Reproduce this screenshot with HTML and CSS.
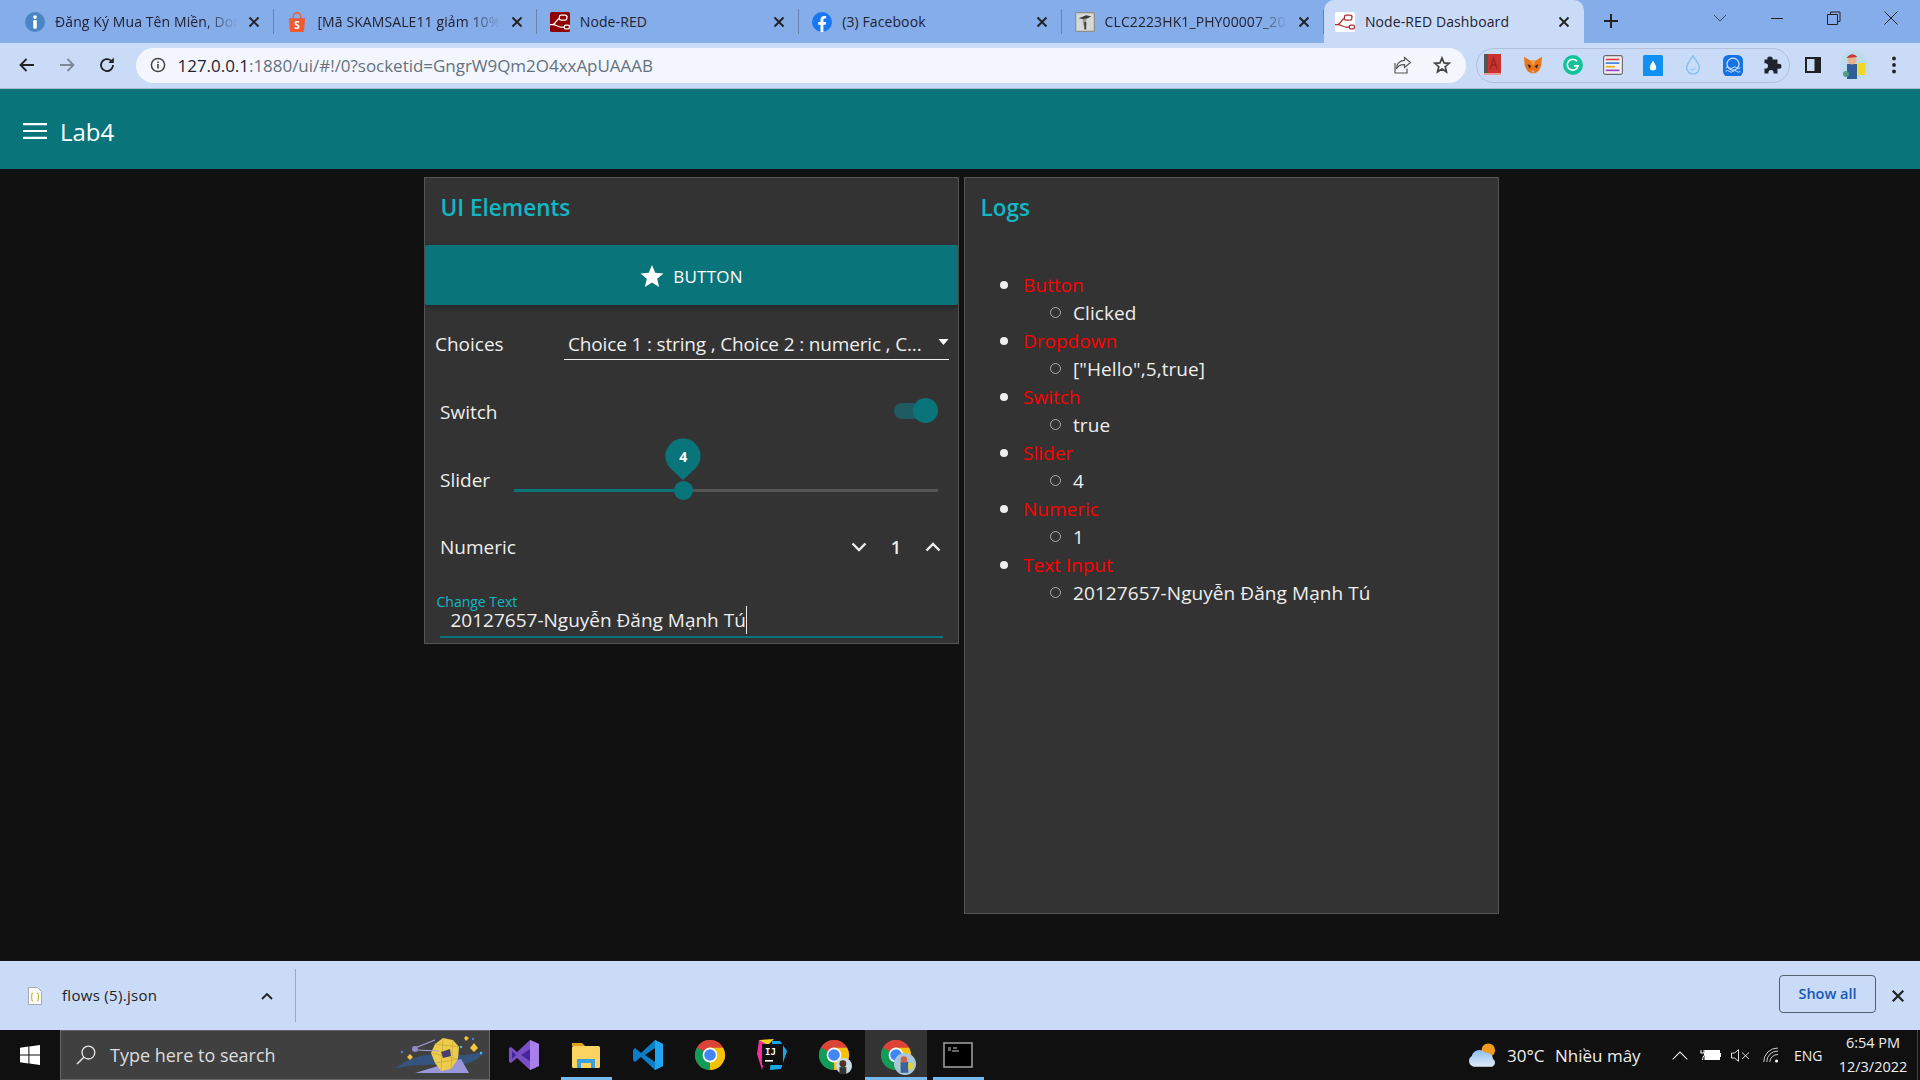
FILE: index.html
```html
<!DOCTYPE html>
<html lang="vi">
<head>
<meta charset="utf-8">
<title>Node-RED Dashboard</title>
<link rel="stylesheet" href="styles.css">
</head>
<body>
<svg class="defs" width="0" height="0" aria-hidden="true">
  <defs>
    <linearGradient id="cloud-fill" x1="0" y1="0" x2="0" y2="1"><stop offset="0" stop-color="#8fc0f2"/><stop offset="1" stop-color="#dfeaf8"/></linearGradient>
  </defs>
  <symbol id="chrome" viewBox="0 0 32 32">
    <circle cx="16" cy="16" r="15" fill="#db4437"/>
    <path d="M16 16 L3 8.5 A15 15 0 0 0 16 31 Z" fill="#0f9d58"/>
    <path d="M16 16 L16 31 A15 15 0 0 0 29 8.5 L16 8.5 Z" fill="#f4c20d"/>
    <path d="M16 8.5 L3 8.5 A15 15 0 0 1 29 8.5 Z" fill="#db4437"/>
    <circle cx="16" cy="16" r="7.4" fill="#fff"/>
    <circle cx="16" cy="16" r="5.8" fill="#4285f4"/>
  </symbol>
  <symbol id="close" viewBox="0 0 12 12">
    <path d="M1.5 1.5 L10.5 10.5 M10.5 1.5 L1.5 10.5" fill="none" stroke="#222" stroke-width="1.9"/>
  </symbol>
</svg>

<div class="tabstrip">
  <div class="tab">
    <svg class="favicon" viewBox="0 0 16 16"><circle cx="8" cy="8" r="8" fill="#4a86c5"/><circle cx="8" cy="4" r="1.5" fill="#fff"/><rect x="6.6" y="6.4" width="2.8" height="7" rx="1" fill="#fff"/></svg>
    <span class="tab-title">Đăng Ký Mua Tên Miền, Don</span>
    <svg class="tab-x"><use href="#close"/></svg>
  </div>
  <div class="tab">
    <svg class="favicon" viewBox="0 0 16 16"><path d="M1.5 5 H14.5 L13.6 15.4 Q13.5 16 12.8 16 H3.2 Q2.5 16 2.4 15.4 Z" fill="#f05a30"/><path d="M5 5 V3.6 A3 3 0 0 1 11 3.6 V5" fill="none" stroke="#f05a30" stroke-width="1.1"/><text x="8" y="13.4" class="fav-s">S</text></svg>
    <span class="tab-title">[Mã SKAMSALE11 giảm 10%</span>
    <svg class="tab-x"><use href="#close"/></svg>
  </div>
  <div class="tab">
    <svg class="favicon" viewBox="0 0 16 16"><rect width="16" height="16" rx="1.5" fill="#8f0000"/><path d="M0 10 H2 C5 10 5 5 8 5 M0 10 H2 C5 10 6 12 9 12 H12 M14 3.5 H10" fill="none" stroke="#fff" stroke-width="1"/><rect x="7.5" y="2.5" width="6" height="4" rx="1.4" fill="#8f0000" stroke="#fff" stroke-width="1"/><rect x="11.5" y="10.5" width="4" height="3" rx="1" fill="#8f0000" stroke="#fff" stroke-width="1"/></svg>
    <span class="tab-title tab-title-plain">Node-RED</span>
    <svg class="tab-x"><use href="#close"/></svg>
  </div>
  <div class="tab">
    <svg class="favicon" viewBox="0 0 16 16"><circle cx="8" cy="8" r="8" fill="#1877f2"/><path d="M6.8 16 V10.2 H5 V7.9 H6.8 V6.2 C6.8 4.2 8 3.1 9.8 3.1 L11.3 3.2 V5.2 H10.3 C9.3 5.2 9.1 5.7 9.1 6.4 V7.9 H11.2 L10.9 10.2 H9.1 V16 Z" fill="#fff"/></svg>
    <span class="tab-title tab-title-plain">(3) Facebook</span>
    <svg class="tab-x"><use href="#close"/></svg>
  </div>
  <div class="tab">
    <svg class="favicon" viewBox="0 0 16 16"><rect x=".5" y=".5" width="15" height="15" rx="1" fill="#d8d8d6" stroke="#8e8e8c"/><path d="M3 5 L9 2.6 L13 3.6 L8 6 Z" fill="#3a3a3a"/><path d="M6 6 L6.6 11 H9 V5" fill="#9a9a98"/><rect x="7.4" y="8" width="1.6" height="6" fill="#444"/></svg>
    <span class="tab-title">CLC2223HK1_PHY00007_20</span>
    <svg class="tab-x"><use href="#close"/></svg>
  </div>
  <div class="tab tab-active">
    <svg class="favicon" viewBox="0 0 16 16"><rect width="16" height="16" rx="1.5" fill="#fff"/><path d="M0 10 H2 C5 10 5 5 8 5 M0 10 H2 C5 10 6 12 9 12 H12 M14 3.5 H10" fill="none" stroke="#a83232" stroke-width="1"/><rect x="7.5" y="2.5" width="6" height="4" rx="1.4" fill="#fff" stroke="#a83232" stroke-width="1"/><rect x="11.5" y="10.5" width="4" height="3" rx="1" fill="#fff" stroke="#a83232" stroke-width="1"/></svg>
    <span class="tab-title tab-title-plain">Node-RED Dashboard</span>
    <svg class="tab-x"><use href="#close"/></svg>
  </div>
  <svg class="new-tab" viewBox="0 0 16 16"><path d="M8 1 V15 M1 8 H15" fill="none" stroke="#222" stroke-width="2"/></svg>
  <div class="win-controls">
    <svg class="win-btn" viewBox="0 0 14 14"><path d="M1 4 L7 10 L13 4" fill="none" stroke="#3a4a60" stroke-width="1"/></svg>
    <svg class="win-btn" viewBox="0 0 14 14"><path d="M1 7.5 H13" fill="none" stroke="#222" stroke-width="1"/></svg>
    <svg class="win-btn" viewBox="0 0 14 14"><path d="M3.5 3 V1 H13 V10.5 H11 M.5 3.5 H10.5 V13.5 H.5 Z" fill="none" stroke="#222" stroke-width="1"/></svg>
    <svg class="win-btn" viewBox="0 0 14 14"><path d="M.5 .5 L13.5 13.5 M13.5 .5 L.5 13.5" fill="none" stroke="#222" stroke-width="1"/></svg>
  </div>
</div>

<div class="toolbar">
  <svg class="nav" viewBox="0 0 18 18"><path d="M16 9 H3 M8.5 3 L2.5 9 L8.5 15" fill="none" stroke="#222" stroke-width="1.8"/></svg>
  <svg class="nav" viewBox="0 0 18 18"><path d="M2 9 H15 M9.5 3 L15.5 9 L9.5 15" fill="none" stroke="#7d8898" stroke-width="1.8"/></svg>
  <svg class="nav" viewBox="0 0 18 18"><path d="M15 9 A6 6 0 1 1 13 4.6" fill="none" stroke="#222" stroke-width="1.8"/><path d="M15.8 1.6 V7 H10.4 Z" fill="#222"/></svg>
  <div class="omnibox">
    <svg class="info" viewBox="0 0 16 16"><circle cx="8" cy="8" r="6.6" fill="none" stroke="#444" stroke-width="1.5"/><rect x="7.2" y="7" width="1.6" height="4.6" fill="#444"/><rect x="7.2" y="4.4" width="1.6" height="1.6" fill="#444"/></svg>
    <span class="url"><span class="url-host">127.0.0.1</span>:1880/ui/#!/0?socketid=GngrW9Qm2O4xxApUAAAB</span>
    <svg class="omni-icon" viewBox="0 0 20 20"><path d="M12.5 2.5 L18.5 7.5 L12.5 12.5 V9.6 C8 9.4 5.5 11.5 4.5 14 C4.5 9 7.5 5.8 12.5 5.4 Z M3 8 V18 H15 V13.5" fill="none" stroke="#555" stroke-width="1.2"/></svg>
    <svg class="omni-icon" viewBox="0 0 20 20"><path d="M10 3 L12 7.9 L17.2 8.3 L13.2 11.7 L14.5 16.8 L10 14 L5.5 16.8 L6.8 11.7 L2.8 8.3 L8 7.9 Z" fill="none" stroke="#444" stroke-width="1.7"/></svg>
  </div>
  <div class="extensions">
    <svg class="ext" viewBox="0 0 20 22"><rect x="1" y="0" width="17" height="21" fill="#c8322f"/><rect x="1" y="0" width="4" height="21" fill="#555"/><rect x="1" y="19" width="17" height="2" fill="#e89a9a"/><path d="M7 15 L10.5 4 L14 15 M8.4 11 H12.6" fill="none" stroke="#a12421" stroke-width="1.3"/></svg>
    <svg class="ext" viewBox="0 0 22 22"><path d="M1 2 L8 6 H14 L21 2 L20 12 L17 18 L13 20 H9 L5 18 L2 12 Z" fill="#e8761b"/><path d="M8 6 L11 12 L14 6 Z" fill="#f6a35c"/><path d="M5 10 L9 12 L7 15 Z M17 10 L13 12 L15 15 Z" fill="#33261c"/><path d="M9 19 L11 16.5 L13 19 Z" fill="#c8b9ad"/></svg>
    <svg class="ext" viewBox="0 0 22 22"><circle cx="11" cy="11" r="11" fill="#15c39a"/><path d="M15.5 7 A6 6 0 1 0 16.6 12 H12" fill="none" stroke="#fff" stroke-width="1.8"/></svg>
    <svg class="ext" viewBox="0 0 22 22"><rect x=".7" y=".7" width="20.6" height="20.6" rx="2" fill="#f0f0f0" stroke="#666" stroke-width="1.2"/><rect x="3" y="4" width="15" height="1.8" fill="#e04040"/><rect x="3" y="8" width="15" height="1.8" fill="#3a7ee0"/><rect x="3" y="12" width="10" height="1.8" fill="#e8b020"/><rect x="3" y="16" width="15" height="1.8" fill="#9040d0"/></svg>
    <svg class="ext" viewBox="0 0 22 22"><rect width="22" height="24" rx="2" fill="#1090f0"/><path d="M11 6 C13 10 14.5 11.5 14.5 13.5 A3.5 3.5 0 0 1 7.5 13.5 C7.5 11.5 9 10 11 6 Z" fill="#fff"/></svg>
    <svg class="ext" viewBox="0 0 22 22"><path d="M11 1 C15 7 18 10 18 14 A7 7 0 0 1 4 14 C4 10 7 7 11 1 Z" fill="none" stroke="#7cc0f2" stroke-width="1.5"/><path d="M8 16 Q11 18 14 14" fill="none" stroke="#7cc0f2" stroke-width="1"/></svg>
    <svg class="ext" viewBox="0 0 22 22"><rect width="22" height="24" rx="6" fill="#1673e6"/><circle cx="11" cy="10" r="6.6" fill="none" stroke="#cfe4ff" stroke-width="1.3"/><path d="M3 14 Q5 12 7 14 T11 14 T15 14 T19 14 M3 18 Q5 16 7 18 T11 18 T15 18 T19 18" fill="none" stroke="#cfe4ff" stroke-width="1.1"/></svg>
    <svg class="ext" viewBox="0 0 20 20"><path d="M7 1.5 C9.5 1.5 10 3 9.6 4.5 H14.5 V9 C16.5 8.4 18.5 9 18.5 11.3 C18.5 13.6 16.5 14.3 14.5 13.6 V18.5 H10.5 C11 16.5 10 15 8 15 C6 15 5 16.5 5.5 18.5 H1.5 V13.5 C3.5 14 5 13 5 11 C5 9 3.5 8 1.5 8.5 V4.5 H4.5 C4 3 4.5 1.5 7 1.5 Z" fill="#1f2430"/></svg>
  </div>
  <svg class="side-panel" viewBox="0 0 18 18"><rect x="1" y="1" width="16" height="16" fill="#202124"/><rect x="3" y="3" width="7.5" height="12" fill="#c9dbf6"/></svg>
  <svg class="avatar" viewBox="0 0 28 30"><ellipse cx="14" cy="15" rx="13.5" ry="15" fill="#bcdcee"/><rect x="7" y="14" width="10" height="15" fill="#2f5e9a"/><circle cx="12" cy="10" r="4.6" fill="#e6b48c"/><path d="M6.5 8 Q12 1 17.5 7 Z" fill="#c8352c"/><rect x="18" y="13" width="7" height="12" fill="#f1d828"/><circle cx="6" cy="24" r="3" fill="#4fa07c"/></svg>
  <svg class="kebab" viewBox="0 0 6 20"><circle cx="3" cy="3.5" r="1.9" fill="#222"/><circle cx="3" cy="10" r="1.9" fill="#222"/><circle cx="3" cy="16.5" r="1.9" fill="#222"/></svg>
</div>

<header class="appbar">
  <svg class="burger" viewBox="0 0 24 16"><path d="M0 1.2 H24 M0 8 H24 M0 14.8 H24" fill="none" stroke="#fff" stroke-width="2.2"/></svg>
  <span class="app-title">Lab4</span>
</header>

<main class="dashboard">
  <section class="card">
    <h2 class="card-title">UI Elements</h2>
    <button class="action" type="button">
      <svg class="action-star" viewBox="0 0 24 24"><path d="M12 1 L15.2 8.7 L23.5 9.4 L17.2 14.8 L19.1 23 L12 18.6 L4.9 23 L6.8 14.8 L.5 9.4 L8.8 8.7 Z" fill="#fff"/></svg>
      <span>BUTTON</span>
    </button>
    <div class="rows">
      <div class="row row-choices">
        <span class="row-label">Choices</span>
        <div class="select">
          <span class="select-value">Choice 1 : string , Choice 2 : numeric , C...</span>
          <svg class="select-arrow" viewBox="0 0 10 6"><path d="M0 0 H10 L5 6 Z" fill="#fff"/></svg>
        </div>
      </div>
      <div class="row row-wide">
        <span class="row-label">Switch</span>
        <div class="switch"><span class="switch-thumb"></span></div>
      </div>
      <div class="row row-wide row-slider">
        <span class="row-label row-label-slider">Slider</span>
        <div class="slider">
          <span class="slider-fill"></span>
          <span class="slider-thumb"></span>
          <span class="slider-pin"><svg class="pin-shape" viewBox="0 0 36 42"><path d="M18 42 L5.5 30.5 A17.6 17.6 0 1 1 30.5 30.5 Z" fill="#0a747b"/></svg><b class="pin-value">4</b></span>
        </div>
      </div>
      <div class="row row-numeric">
        <span class="row-label">Numeric</span>
        <div class="stepper">
          <svg class="chev" viewBox="0 0 16 10"><path d="M1.5 1.5 L8 8 L14.5 1.5" fill="none" stroke="#eee" stroke-width="2.4"/></svg>
          <span class="stepper-value">1</span>
          <svg class="chev" viewBox="0 0 16 10"><path d="M1.5 8.5 L8 2 L14.5 8.5" fill="none" stroke="#eee" stroke-width="2.4"/></svg>
        </div>
      </div>
      <div class="text-field">
        <span class="field-label">Change Text</span>
        <div class="field-value"><span>20127657-Nguyễn Đăng Mạnh Tú</span><i class="caret"></i></div>
      </div>
    </div>
  </section>

  <section class="card card-logs">
    <h2 class="card-title">Logs</h2>
    <ul class="log">
      <li><span class="log-key">Button</span><ul><li>Clicked</li></ul></li>
      <li><span class="log-key">Dropdown</span><ul><li>["Hello",5,true]</li></ul></li>
      <li><span class="log-key">Switch</span><ul><li>true</li></ul></li>
      <li><span class="log-key">Slider</span><ul><li>4</li></ul></li>
      <li><span class="log-key">Numeric</span><ul><li>1</li></ul></li>
      <li><span class="log-key">Text Input</span><ul><li>20127657-Nguyễn Đăng Mạnh Tú</li></ul></li>
    </ul>
  </section>
</main>

<div class="downloads">
  <svg class="file-icon" viewBox="0 0 14 18"><path d="M.5 .5 H9.5 L13.5 4.5 V17.5 H.5 Z" fill="#fafafa" stroke="#a9a9a9"/><path d="M5 6 Q3.5 6 3.8 9 Q3.8 10 3 10 Q3.8 10 3.8 11 Q3.5 14 5 14 M9 6 Q10.5 6 10.2 9 Q10.2 10 11 10 Q10.2 10 10.2 11 Q10.5 14 9 14" fill="none" stroke="#c9b826" stroke-width="1.1"/></svg>
  <span class="file-name">flows (5).json</span>
  <svg class="file-chev" viewBox="0 0 12 8"><path d="M1 7 L6 2 L11 7" fill="none" stroke="#222" stroke-width="1.9"/></svg>
  <span class="dl-sep"></span>
  <button class="show-all" type="button">Show all</button>
  <svg class="dl-x"><use href="#close"/></svg>
</div>

<footer class="taskbar">
  <svg class="start" viewBox="0 0 20 20"><path d="M0 2.8 L8.4 1.6 V9.4 H0 Z M9.4 1.5 L20 0 V9.4 H9.4 Z M0 10.5 H8.4 V18.4 L0 17.2 Z M9.4 10.5 H20 V20 L9.4 18.5 Z" fill="#fff"/></svg>
  <div class="search">
    <svg class="search-icon" viewBox="0 0 20 20"><circle cx="12.4" cy="7.6" r="6.4" fill="none" stroke="#e8e8e8" stroke-width="1.3"/><path d="M7.8 12.2 L1 19" fill="none" stroke="#e8e8e8" stroke-width="1.5"/></svg>
    <span class="search-text">Type here to search</span>
    <svg class="search-art" viewBox="0 0 92 40"><path d="M0 33 Q22 18 40 20 Q65 22 90 17 Q78 32 50 30 Q25 28 0 33 Z" fill="#35557f"/><path d="M20 38 L66 24 L74 38 Z" fill="#9a96dc"/><path d="M40 9 L48 3 L58 5 L64 12 L63 24 L56 34 L46 36 L40 28 L36 18 Z" fill="#eccc4c"/><path d="M48 3 L46 36 M58 5 L56 34 M36 18 L63 24 M40 9 L64 12 M40 28 L63 24" stroke="#b99a2a" stroke-width=".5" fill="none"/><path d="M46 17 L55 14 L56 21 L48 23 Z" fill="#45406f"/><path d="M20 13 L40 5 M21 15 L44 16" stroke="#a7a2d8" stroke-width="1.2"/><circle cx="20" cy="14" r="3" fill="#8f8ac9"/><path d="M12 22 L15 19 L18 22 L15 25 Z M75 13 L79 8 L83 13 L79 17 Z M69 3 L71 1 L74 3 L71 6 Z" fill="#f3c53d"/><circle cx="7" cy="17" r="1.2" fill="#4b86c8"/><circle cx="66" cy="12" r="1.2" fill="#4bc0e0"/><circle cx="78" cy="4" r="1.2" fill="#4b86c8"/><circle cx="86" cy="18" r="1.2" fill="#4bc0e0"/></svg>
  </div>
  <div class="apps">
    <div class="app"><svg class="app-icon" viewBox="0 0 32 32"><path d="M22 1 L31 5 V27 L22 31 L9 19 L3 24 L1 23 V9 L3 8 L9 13 Z" fill="#7b4fc4"/><path d="M22 1 L31 5 V27 L22 31 Z" fill="#a97fe8"/><path d="M22 10 L13 16 L22 22 Z M4 12 V20 L8 16 Z" fill="#43269a"/></svg></div>
    <div class="app app-open"><svg class="app-icon" viewBox="0 0 32 32"><path d="M2 4 H12 L15 7 H2 Z" fill="#e0a21b"/><rect x="2" y="7" width="28" height="22" rx="1.5" fill="#fbd35f"/><path d="M7 20 H25 V29 H21 V24 H11 V29 H7 Z" fill="#3aa0e2"/></svg></div>
    <div class="app"><svg class="app-icon" viewBox="0 0 32 32"><path d="M23 1 L31 5 V27 L23 31 L9 18 L3 23 L1 21 V11 L3 9 L9 14 Z" fill="#0a7fc9"/><path d="M23 1 L31 5 V27 L23 31 Z" fill="#1fa4ed"/><path d="M23 9 L13 16 L23 23 Z" fill="#101010"/></svg></div>
    <div class="app"><svg class="app-icon"><use href="#chrome"/></svg></div>
    <div class="app"><svg class="app-icon" viewBox="0 0 32 32"><path d="M3 1 L14 2 L6 31 L1 15 Z" fill="#f0309a"/><path d="M16 2 H24 L31 12 L25 30 L14 31 Z" fill="#18a8e8"/><path d="M3 1 L18 0 L12 6 Z" fill="#f5d51a"/><rect x="6" y="5" width="21" height="21" fill="#111"/><text x="9" y="16" class="ij">IJ</text><rect x="9" y="21" width="8" height="1.6" fill="#fff"/></svg></div>
    <div class="app"><span class="app-stack"><svg class="app-icon"><use href="#chrome"/></svg><svg class="app-badge" viewBox="0 0 14 14"><circle cx="7" cy="7" r="7" fill="#c9dce8"/><circle cx="6" cy="5" r="3" fill="#4a3527"/><rect x="3" y="8" width="6" height="6" fill="#333"/></svg></span></div>
    <div class="app app-active"><span class="app-stack"><svg class="app-icon"><use href="#chrome"/></svg><svg class="app-badge app-badge-lg" viewBox="0 0 20 20"><circle cx="10" cy="10" r="10" fill="#a8c8d8"/><rect x="6" y="8" width="7" height="10" fill="#3c649a"/><circle cx="9" cy="6" r="3" fill="#c8644c"/><rect x="13" y="9" width="4" height="6" fill="#e8d030"/></svg></span></div>
    <div class="app app-open"><svg class="app-icon" viewBox="0 0 32 32"><rect x="2" y="4" width="28" height="24" fill="#000" stroke="#9a9a9a" stroke-width="1.6"/><path d="M6 9 H9 M11 9 H15 M6 11 H9 M10 12 H17" stroke="#ccc" stroke-width="1"/></svg></div>
  </div>
  <div class="tray">
    <svg class="weather" viewBox="0 0 32 26"><circle cx="22" cy="8" r="7" fill="#f19a1f"/><path d="M7 25 A6 6 0 0 1 5 14 A8 8 0 0 1 19 11 A6.5 6.5 0 0 1 27 17 A4.5 4.5 0 0 1 26 25 Z" fill="url(#cloud-fill)"/></svg>
    <span class="temp">30°C</span>
    <span class="weather-text">Nhiều mây</span>
    <svg class="tray-chev" viewBox="0 0 16 9"><path d="M.7 8.3 L8 1 L15.3 8.3" fill="none" stroke="#eee" stroke-width="1.1"/></svg>
    <svg class="tray-batt" viewBox="0 0 21 12"><rect x="5" y="1.5" width="14.5" height="9" fill="#fff" stroke="#fff"/><rect x="20" y="4" width="1" height="4" fill="#fff"/><path d="M1 1 V4 M4 1 V4 M.5 4 H4.5 V6 Q2.5 8 2.5 11" fill="none" stroke="#fff"/></svg>
    <svg class="tray-sound" viewBox="0 0 19 13"><path d="M.5 4 H3.5 L7.5 .7 V12.3 L3.5 9 H.5 Z" fill="none" stroke="#ddd"/><path d="M11 3.5 L18 10 M18 3.5 L11 10" stroke="#ddd"/></svg>
    <svg class="tray-wifi" viewBox="0 0 16 16"><path d="M.7 15 A14 14 0 0 1 15 1 M3.7 15 A11 11 0 0 1 15 4 M6.7 15 A8 8 0 0 1 15 7.5" fill="none" stroke="#ccc"/><circle cx="13.5" cy="14" r="1.5" fill="#fff"/></svg>
    <span class="lang">ENG</span>
    <div class="clock"><span>6:54 PM</span><span>12/3/2022</span></div>
    <span class="desk-peek"></span>
  </div>
</footer>
</body>
</html>
```
FILE: styles.css
```css
* { box-sizing: border-box; }
html, body { margin: 0; height: 100%; }
body {
  display: flex;
  flex-direction: column;
  height: 1080px;
  overflow: hidden;
  background: #111;
  font-family: "Open Sans", "Noto Sans", sans-serif;
  color: #eee;
}
.defs { position: absolute; }

/* browser tabs */
.tabstrip {
  flex: none;
  height: 43px;
  display: flex;
  padding-left: 12px;
  background: #85ade9;
  color: #223;
}
.tab {
  flex: none;
  width: 262.4px;
  height: 43px;
  display: flex;
  align-items: center;
  padding: 0 14px 0 13px;
  position: relative;
  font-size: 14px;
  letter-spacing: .1px;
}
.tab::after {
  content: "";
  position: absolute;
  right: 0;
  top: 9px;
  width: 1px;
  height: 25px;
  background: #6a83aa;
}
.tab-active {
  width: 260px;
  padding-left: 11px;
  background: #c9dbf6;
  border-radius: 10px 10px 0 0;
}
.tab:nth-last-of-type(2)::after, .tab-active::after { display: none; }
.favicon { flex: none; width: 20px; height: 20px; margin-right: 10px; }
.tab-title {
  flex: 1;
  min-width: 0;
  white-space: nowrap;
  -webkit-mask-image: linear-gradient(90deg, #000 80%, transparent 98%);
  mask-image: linear-gradient(90deg, #000 80%, transparent 98%);
}
.tab-title-plain { -webkit-mask-image: none; mask-image: none; }
.tab-x { flex: none; width: 12px; height: 12px; margin-left: 6px; }
.fav-s { font: 700 8px "Open Sans", sans-serif; fill: #fff; text-anchor: middle; }
.new-tab { flex: none; width: 16px; height: 16px; margin: 13px 0 0 19px; }
.win-controls {
  flex: none;
  display: flex;
  margin-left: 94px;
  gap: 43px;
  padding-top: 11px;
  align-items: flex-start;
}
.win-btn { width: 14px; height: 14px; }

/* address bar */
.toolbar {
  flex: none;
  height: 46px;
  display: flex;
  align-items: center;
  padding: 0 0 1px 18px;
  background: #c9dbf6;
  border-bottom: 1px solid #a9b9d4;
}
.nav { flex: none; width: 18px; height: 18px; margin-right: 22px; }
.omnibox {
  flex: none;
  width: 1330px;
  height: 35px;
  margin-left: -2.5px;
  display: flex;
  align-items: center;
  padding: 0 14px 0 14px;
  background: #f3f7fd;
  border-radius: 18px;
}
.info { flex: none; width: 16px; height: 16px; margin-right: 12px; }
.url { flex: 1; font-size: 17px; letter-spacing: -.03px; color: #66707e; white-space: nowrap; }
.url-host { color: #1f2430; }
.omni-icon { flex: none; width: 20px; height: 20px; margin-left: 20px; }
.extensions {
  flex: none;
  width: 314px;
  height: 35px;
  margin-left: 10px;
  display: flex;
  align-items: center;
  justify-content: space-between;
  padding: 0 6px;
  border: 1px solid #b1c1dd;
  border-radius: 18px;
}
.ext { flex: none; width: 20px; height: 22px; }
.side-panel { flex: none; width: 18px; height: 18px; margin-left: 14px; }
.avatar { flex: none; width: 28px; height: 30px; margin-left: 18px; }
.kebab { flex: none; width: 6px; height: 20px; margin-left: 23px; }

/* dashboard */
.appbar {
  flex: none;
  height: 80px;
  display: flex;
  align-items: center;
  padding: 4px 0 0 23px;
  background: #0a747b;
  color: #fff;
}
.burger { flex: none; width: 24px; height: 16px; margin-right: 13px; }
.app-title { font-size: 24px; }
.dashboard {
  flex: 1;
  min-height: 0;
  display: flex;
  align-items: flex-start;
  gap: 5px;
  padding: 8px 0 0 424px;
  background: #111;
}
.card {
  flex: none;
  width: 535px;
  height: 467px;
  background: #333;
  border: 1px solid #555;
}
.card-logs { height: 737px; }
.card-title {
  margin: 0;
  height: 67px;
  padding: 13px 0 0 15.5px;
  font-size: 22.5px;
  line-height: 34px;
  font-weight: 600;
  color: #10b8c6;
}
.action {
  display: flex;
  align-items: center;
  justify-content: center;
  gap: 9px;
  width: 100%;
  height: 60px;
  padding: 2px 0 0;
  border: 0;
  border-radius: 2px;
  background: #0a747b;
  color: #fff;
  font: 500 17px "Open Sans", sans-serif;
  letter-spacing: .2px;
  box-shadow: 0 2px 5px rgba(0,0,0,.3);
}
.action-star { width: 24px; height: 24px; }
.rows { display: flex; flex-direction: column; gap: 7.5px; margin-top: 9px; }
.row { height: 60px; display: flex; align-items: center; font-size: 19px; }
.row-choices { padding: 0 9px 0 10px; }
.row-wide { padding: 0 20px 0 15px; }
.row-slider { padding-top: 1.5px; }
.row-numeric { padding: 0 17px 0 15px; justify-content: space-between; }
.row-label { flex: none; }
.row-label-slider { width: 74px; }
.select {
  margin-left: auto;
  width: 385px;
  height: 30px;
  margin-top: 1px;
  padding: 0 0 0 4px;
  display: flex;
  align-items: center;
  justify-content: space-between;
  border-bottom: 1px solid #eee;
}
.select-value { white-space: nowrap; letter-spacing: -.16px; }
.select-arrow { width: 11px; height: 6px; margin-right: 0; margin-bottom: 5px; }
.switch {
  position: relative;
  margin-left: auto;
  width: 44px;
  height: 16px;
  margin-top: -2px;
  border-radius: 8px;
  background: #1f5b60;
}
.switch-thumb {
  position: absolute;
  right: 0;
  top: -5px;
  width: 25px;
  height: 25px;
  border-radius: 50%;
  background: #0a747b;
}
.slider {
  position: relative;
  flex: 1;
  height: 3px;
  margin-top: 21.5px;
  background: #555;
}
.slider-fill { position: absolute; left: 0; top: 0; height: 3px; width: 39.9%; background: #0a747b; }
.slider-thumb {
  position: absolute;
  left: 39.9%;
  top: -8px;
  width: 19px;
  height: 19px;
  margin-left: -9.5px;
  border-radius: 50%;
  background: #0a747b;
}
.slider-pin {
  position: absolute;
  left: 39.9%;
  top: -51px;
  width: 36px;
  height: 42px;
  margin-left: -18px;
  display: flex;
  justify-content: center;
}
.pin-shape { position: absolute; inset: 0; width: 36px; height: 42px; }
.pin-value { position: relative; font-size: 14px; line-height: 38px; color: #fff; }
.stepper { display: flex; align-items: center; font-weight: 600; }
.stepper-value { width: 58px; text-align: center; font-size: 18px; }
.chev { width: 16px; height: 10px; }
.text-field { margin: 9.5px 0 4px 11.5px; display: flex; flex-direction: column; }
.field-label { font-size: 14px; line-height: 15px; color: #10b8c6; }
.field-value {
  margin: 0 15px 0 3.5px;
  height: 29px;
  padding: 0 0 5px 10.5px;
  display: flex;
  align-items: center;
  border-bottom: 2px solid #0a747b;
  font-size: 19px;
  line-height: 22px;
  white-space: nowrap;
}
.caret { flex: none; width: 1px; height: 28px; background: #eee; }

/* log list */
.log { margin: 26px 0 0; padding: 0 0 0 58px; list-style: none; font-size: 19px; line-height: 28px; }
.log > li::before {
  content: "";
  display: inline-block;
  width: 8px;
  height: 8px;
  margin: 0 15px 0 -23px;
  vertical-align: 3px;
  border-radius: 50%;
  background: #eee;
}
.log ul { margin: 0; padding: 0 0 0 48px; list-style: none; letter-spacing: .08px; }
.log ul li::before {
  content: "";
  display: inline-block;
  width: 9px;
  height: 9px;
  margin: 0 12.5px 0 -21.5px;
  vertical-align: 2px;
  border: 1.5px solid #aaa;
  border-radius: 50%;
}
.log-key { color: #f00; }

/* download shelf */
.downloads {
  flex: none;
  height: 69px;
  display: flex;
  align-items: center;
  padding: 0 15px 0 28px;
  background: #c9dbf6;
  color: #222;
}
.file-icon { flex: none; width: 14px; height: 18px; margin-right: 20px; }
.file-name { flex: none; width: 199px; margin-top: -2px; font-size: 15px; letter-spacing: .3px; }
.file-chev { flex: none; width: 12px; height: 8px; }
.dl-sep { flex: none; width: 1px; height: 53px; margin-left: 22px; background: #9aa9c0; }
.show-all {
  flex: none;
  margin: -3px 0 0 auto;
  width: 97px;
  height: 38px;
  padding: 0 0 2px;
  background: transparent;
  border: 1px solid #55606e;
  border-radius: 4px;
  color: #1558b8;
  font: 600 14.5px "Open Sans", sans-serif;
}
.dl-x { flex: none; width: 14px; height: 14px; margin-left: 15px; }

/* windows taskbar */
.taskbar {
  flex: none;
  height: 50px;
  display: flex;
  align-items: center;
  background: #101010;
  color: #eee;
}
.start { flex: none; width: 20px; height: 20px; margin: 0 20px; }
.search {
  flex: none;
  width: 430px;
  height: 50px;
  display: flex;
  align-items: center;
  padding-left: 15px;
  background: #404040;
  border: 1px solid #666;
}
.search-icon { flex: none; width: 20px; height: 20px; margin-right: 14px; }
.search-text { flex: 1; font-size: 18px; color: #ddd; }
.search-art { flex: none; width: 92px; height: 40px; margin-right: 2px; }
.apps { flex: none; display: flex; height: 50px; margin-left: 3px; }
.app {
  flex: none;
  position: relative;
  width: 62px;
  height: 50px;
  display: flex;
  align-items: center;
  justify-content: center;
}
.app-open::after {
  content: "";
  position: absolute;
  left: 5.5px;
  right: 5.5px;
  bottom: 0;
  height: 3px;
  background: #76b9ed;
}
.app-active { background: #333; box-shadow: inset 0 -3px 0 #76b9ed; }
.app-icon { display: block; width: 32px; height: 32px; }
.app-stack { position: relative; display: block; width: 32px; height: 32px; }
.app-badge { position: absolute; right: -2px; bottom: -3px; width: 16px; height: 16px; }
.app-badge-lg { width: 22px; height: 22px; right: -4px; bottom: -4px; }
.ij { font: 700 9px "DejaVu Sans Mono", monospace; fill: #fff; }
.tray { flex: 1; display: flex; align-items: center; height: 50px; padding-left: 478px; font-size: 17px; min-width: 0; }
.weather { flex: none; width: 31px; height: 26px; margin-right: 9px; }
.temp { flex: none; width: 48px; }
.weather-text { flex: none; width: 116.5px; white-space: nowrap; }
.tray-chev { flex: none; width: 16px; height: 9px; }
.tray-batt { flex: none; width: 21px; height: 12px; margin-left: 12px; }
.tray-sound { flex: none; width: 19px; height: 13px; margin-left: 10px; }
.tray-wifi { flex: none; width: 16px; height: 16px; margin-left: 13.6px; }
.lang { flex: none; margin-left: 14.9px; width: 44px; font-size: 14px; }
.clock { flex: none; display: flex; flex-direction: column; align-items: center; width: 70px; font-size: 14.5px; line-height: 24px; }
.desk-peek { flex: none; width: 1px; height: 50px; margin-left: 9px; background: #444; }
```
